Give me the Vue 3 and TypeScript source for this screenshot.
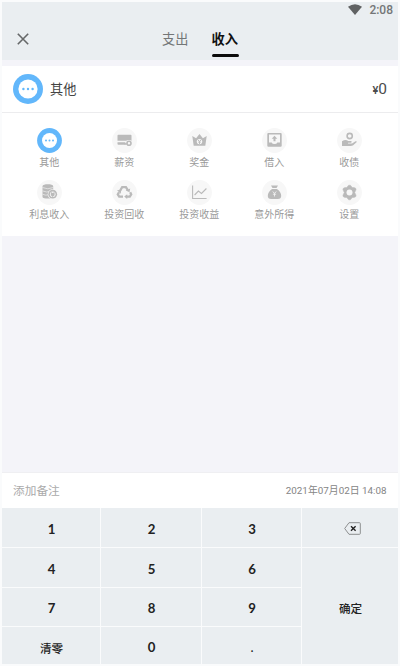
<script setup lang="ts">
interface Category {
  name: string
  icon: string
}

const categories: Category[] = [
  { name: '其他', icon: 'more' },
  { name: '薪资', icon: 'card' },
  { name: '奖金', icon: 'crown' },
  { name: '借入', icon: 'inbox' },
  { name: '收债', icon: 'hand' },
  { name: '利息收入', icon: 'coins' },
  { name: '投资回收', icon: 'recycle' },
  { name: '投资收益', icon: 'chart' },
  { name: '意外所得', icon: 'bag' },
  { name: '设置', icon: 'gear' },
]

const keys: string[] = ['1', '2', '3', 'del', '4', '5', '6', '确定', '7', '8', '9', '清零', '0', '.']

const keyClass = (key: string) => ({
  confirm: key === '确定',
  word: key === '清零' || key === '确定',
  dot: key === '.',
})
</script>

<template>
  <main class="screen">
    <header class="header">
      <div class="status">
        <svg class="wifi" viewBox="0 0 14 11"><path d="M0 2.8Q7-2.2 14 2.8L7 11Z" /></svg>
        <span>2:08</span>
      </div>
      <nav class="nav">
        <svg class="close" viewBox="0 0 12 12"><path d="M.8.8 11.2 11.2M11.2.8.8 11.2" /></svg>
        <span class="tab">支出</span>
        <span class="tab active">收入</span>
      </nav>
    </header>

    <section class="amount">
      <span class="ring"><svg viewBox="0 0 30 30"><circle cx="15" cy="15" r="9.6" fill="#fff" /><g fill="#62b7fb"><circle cx="10.4" cy="15" r="1.2" /><circle cx="15" cy="15" r="1.2" /><circle cx="19.6" cy="15" r="1.2" /></g></svg></span>
      <span class="name">其他</span>
      <span class="value"><small>¥</small>0</span>
    </section>

    <section class="categories">
      <div v-for="item in categories" :key="item.name" class="category">
        <svg class="icon" :class="{ selected: item.icon === 'more' }" viewBox="0 0 25 25">
          <circle class="disc" cx="12.5" cy="12.5" r="12.4" />
          <g v-if="item.icon === 'more'">
            <circle cx="12.5" cy="12.5" r="7.5" fill="#fff" />
            <g fill="#62b7fb"><circle cx="9" cy="12.5" r="1" /><circle cx="12.5" cy="12.5" r="1" /><circle cx="16" cy="12.5" r="1" /></g>
          </g>
          <g v-else-if="item.icon === 'card'">
            <path class="fill" d="M6.3 6.8h12.4q.8 0 .8.8v5.2h-14V7.6q0-.8.8-.8ZM5.5 14.3h8v2.4H6.3q-.8 0-.8-.8Z" />
            <circle cx="16.8" cy="15.3" r="3.2" fill="#f7f7f7" />
            <circle class="line" cx="17" cy="15.3" r="2" /><path class="line" d="M14.8 15.9h-2.3" />
          </g>
          <g v-else-if="item.icon === 'crown'">
            <path class="fill" d="m5.3 8 3.8 2.3 3.4-4.4 3.4 4.4L19.7 8l-1.4 9.8H6.7Z" />
            <circle cx="12.5" cy="13.6" r="2.7" fill="#f7f7f7" />
            <path class="thin" d="m11 11.9 1.5 1.6 1.5-1.6M12.5 13.5v2.4M11.2 14.1h2.6" />
          </g>
          <g v-else-if="item.icon === 'inbox'">
            <path class="fill" fill-rule="evenodd" d="M6.3 5h12.4q1 0 1 1v11.8q0 1-1 1H6.3q-1 0-1-1V6q0-1 1-1Zm.7 1.5v8h2.7q.5 1.5 2.8 1.5t2.8-1.5H18v-8Z" />
            <path class="fill" d="m12.5 7.8 2.8 3h-1.8v2.4h-2v-2.4H9.7Z" />
          </g>
          <g v-else-if="item.icon === 'hand'">
            <circle class="line" cx="12.7" cy="8" r="2.6" />
            <path class="fill" d="M5 13.2q3.8-2.1 6.2-.1h3q1.3.9-.2 1.7h-3v.7h4.1l3.4-2.3q1.5-.3 1.3.9l-3.6 3.1q-1 .8-2.7.8H5Z" />
          </g>
          <g v-else-if="item.icon === 'coins'">
            <path class="fill" d="M5.5 6.3c0-2.6 10.7-2.6 10.7 0v10.8c0 2-10.7 2-10.7 0Z" />
            <path d="M5.5 7.5q5.3 2.6 10.7 0M5.5 10.9q4.4 2 8 .5M5.5 14.2q2.9 1.4 5.5.8" fill="none" stroke="#f7f7f7" stroke-width=".6" />
            <circle cx="15.7" cy="14.2" r="5" fill="#f7f7f7" /><circle class="fill" cx="15.7" cy="14.2" r="4.4" />
            <circle cx="15.7" cy="14.2" r="2.8" fill="#f7f7f7" /><path class="fill" d="m13.8 12 1.9 1 1.9-1v3.3l-1.9 1.6-1.9-1.6Z" />
          </g>
          <g v-else-if="item.icon === 'recycle'" class="arrows">
            <path d="m8.2 10.5 2-3.4h3.7l1.9 3.1M18.2 12.2l1 2.3-1.4 2.1h-3.2M11 16.6H7.2l-1.4-2.1 1.2-2.3" />
            <path class="fill tip" d="m18.2 8.4-.7 3.9-3.8-1.9ZM15.2 14.2v4.9l-3-2.5ZM5 10.3l4.3-.6-.6 4.1Z" />
          </g>
          <g v-else-if="item.icon === 'chart'">
            <path class="thin axis" d="M5.6 5.5v13h14M7.6 15l3.8-4 3.1 2.5 4.9-5" />
          </g>
          <g v-else-if="item.icon === 'bag'">
            <path class="fill" d="M9 5.5h7L14.5 8h-4ZM10 9h5q4.2 3.2 4.2 6.7 0 3.2-3.3 3.2H9.1q-3.3 0-3.3-3.2Q5.8 12.2 10 9Z" />
            <path d="m10.8 11.5 1.7 2 1.7-2M12.5 13.5v3M10.9 14.2h3.2" fill="none" stroke="#f7f7f7" stroke-width=".8" />
          </g>
          <g v-else>
            <path class="fill gear" d="m10.7 6.2 1-1h1.6l1 1 .8 1.3 1.7.1 1.6.4.7 1.2-.5 1.6-.9 1.7.9 1.7.5 1.6-.7 1.2-1.6.4-1.7.1-.8 1.3-1 1h-1.6l-1-1-.8-1.3-1.7-.1-1.6-.4-.7-1.2.5-1.6.9-1.7-.9-1.7-.5-1.6.7-1.2 1.6-.4 1.7-.1Z" />
            <circle cx="12.5" cy="12.5" r="3" fill="#f7f7f7" />
          </g>
        </svg>
        <span class="label">{{ item.name }}</span>
      </div>
    </section>

    <div class="blank"></div>

    <section class="note">
      <span class="hint">添加备注</span>
      <time>2021年07月02日 14:08</time>
    </section>

    <section class="keypad">
      <button v-for="key in keys" :key="key" class="key" :class="keyClass(key)">
        <svg v-if="key === 'del'" class="delete" viewBox="0 0 17 13">
          <path d="M5 .7h10.5q.8 0 .8.8v10q0 .8-.8.8H5L.7 6.5Z" fill="none" stroke="#8d8f90" />
          <path d="m7 4.3 4.6 4.4M11.6 4.3 7 8.7" stroke="#222" stroke-width="1.4" />
        </svg>
        <template v-else>{{ key }}</template>
      </button>
    </section>
  </main>
</template>

<style>
body { background: #fbfbfc; }
</style>

<style scoped>
.screen {
  box-sizing: border-box;
  width: 400px;
  height: 666px;
  padding: 2px;
  display: flex;
  flex-direction: column;
  overflow: hidden;
  background: #fafbfc;
  font-family: Roboto, "Noto Sans CJK SC", sans-serif;
}
.header { height: 58px; flex: none; background: #eaeef1; }
.status {
  height: 15px;
  padding-right: 5px;
  display: flex;
  align-items: center;
  justify-content: flex-end;
  gap: 7px;
  font-size: 12px;
  font-weight: 500;
  color: #747677;
}
.wifi { width: 14px; height: 11px; fill: #606263; }
.nav { height: 43px; display: flex; }
.close { width: 12px; height: 12px; margin: 16px 0 0 15px; fill: none; stroke: #666869; stroke-width: 1.6; }
.tab {
  box-sizing: border-box;
  width: 27px;
  height: 39px;
  padding-top: 9px;
  margin-left: 133px;
  line-height: 28px;
  font-size: 13.2px;
  white-space: nowrap;
  color: #737677;
}
.tab.active { margin-left: 22.5px; font-weight: 700; color: #111; }
.tab.active::after { content: ""; display: block; height: 3px; border-radius: 1.5px; background: #0b0b0b; }
.amount {
  box-sizing: border-box;
  height: 53px;
  flex: none;
  padding: 0 11px 0 11px;
  display: flex;
  align-items: center;
  background: #fff;
  border-top: 6px solid #f4f4f9;
  border-bottom: 1px solid #ececee;
}
.ring { display: block; width: 30px; height: 30px; border-radius: 50%; background: #62b7fb; }
.ring svg { display: block; }
.name { margin: -1px 0 0 7px; font-size: 13.2px; color: #444; }
.value { margin-left: auto; font-size: 15.5px; color: #4c4c4c; }
.value small { font-size: 11px; font-weight: 500; }
.categories {
  box-sizing: border-box;
  height: 123px;
  flex: none;
  padding: 15px 11px 0 9.8px;
  display: grid;
  grid-template-columns: repeat(5, 75px);
  grid-template-rows: 52px 52px;
  background: #fff;
}
.category { display: flex; flex-direction: column; align-items: center; }
.icon { width: 25px; height: 25px; }
.disc { fill: #f7f7f7; }
.selected .disc { fill: #62b7fb; }
.fill { fill: #bababa; }
.line { fill: none; stroke: #bababa; stroke-width: 1.6; }
.thin { fill: none; stroke: #bababa; stroke-width: 1; }
.axis { stroke-width: 1.1; }
.arrows { fill: none; stroke: #bababa; stroke-width: 2.3; }
.tip { stroke: none; }
.gear { stroke: #bababa; stroke-width: .5; stroke-linejoin: round; }
.label { height: 16px; margin-top: 2px; line-height: 16px; font-size: 10px; white-space: nowrap; color: #999; }
.blank { height: 236px; flex: none; background: #f4f4f9; border-bottom: 1px solid #efeff2; }
.note {
  box-sizing: border-box;
  height: 35px;
  flex: none;
  padding: 0 11.5px 2px 11px;
  display: flex;
  align-items: center;
  justify-content: space-between;
  background: #fff;
}
.hint { font-size: 11.7px; color: #aaa; }
time { font-size: 9.85px; color: #858585; }
.keypad {
  flex: 1;
  display: grid;
  grid-template-columns: 98px 100px 99px 96px;
  grid-template-rows: 39px 39px 38px 37px;
  gap: 1px;
}
.key {
  display: flex;
  align-items: center;
  justify-content: center;
  border: 0;
  padding: 2px 0 0 1px;
  background: #eaeef1;
  color: #222;
  font: 700 13.2px Lato, "Noto Sans CJK SC", sans-serif;
}
.word { padding-top: 4px; font-size: 11.6px; font-weight: 500; }
.confirm { grid-row: 2 / 5; grid-column: 4; padding-top: 4px; }
.dot { font-weight: 400; }
.delete { width: 17px; height: 13px; margin-left: 4px; }
</style>
